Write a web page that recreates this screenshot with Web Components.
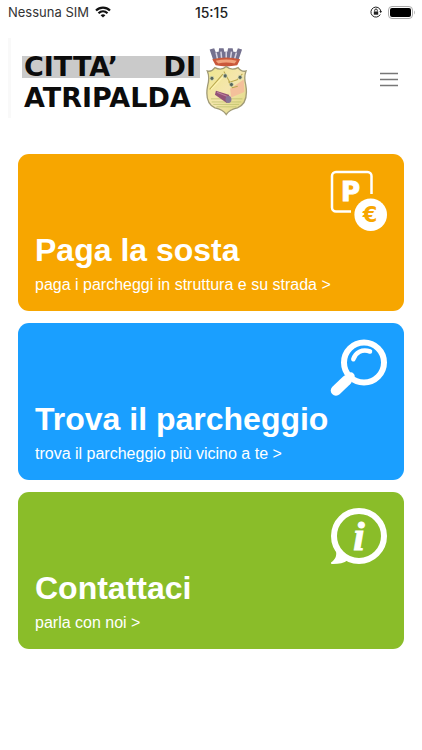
<!DOCTYPE html>
<html lang="it">
<head>
<meta charset="utf-8">
<meta name="viewport" content="width=device-width, initial-scale=1">
<title>Città di Atripalda</title>
<style>
  body {
    margin: 0;
    background: #fff;
    font-family: "Liberation Sans", Arial, sans-serif;
  }

  main {
    display: grid;
    gap: 12px;
    padding: 36px 18px;
  }
</style>
</head>
<body>
<status-bar carrier="Nessuna SIM" time="15:15"></status-bar>
<app-header>
  <city-logo></city-logo>
</app-header>
<main>
  <action-card color="#f7a600" href="#paga">
    <svg slot="icon" width="58" height="61" viewBox="0 0 58 61" fill="none" aria-hidden="true">
      <path d="M42.5 24V6a4 4 0 0 0-4-4H7a4 4 0 0 0-4 4v31.500a4 4 0 0 0 4 4h15" stroke="#fff" stroke-width="2.500"/>
      <text x="12" y="31" font-family="DejaVu Sans, sans-serif" font-weight="bold" font-size="26" fill="#fff" stroke="#fff">P</text>
      <circle cx="41.700" cy="44.700" r="16.300" fill="#fff"/>
      <text x="41" y="52" text-anchor="middle" font-family="DejaVu Sans, sans-serif" font-weight="bold" font-size="21" fill="#f7a600">€</text>
    </svg>
    <span slot="title">Paga la sosta</span>
    paga i parcheggi in struttura e su strada &gt;
  </action-card>
  <action-card color="#1a9fff" href="#trova">
    <svg slot="icon" width="58" height="61" viewBox="0 0 58 61" fill="none" stroke="#fff" stroke-linecap="round" aria-hidden="true">
      <circle cx="35" cy="23.500" r="20" stroke-width="6"/>
      <path d="M7 51.500L17.500 41.500" stroke-width="10.500"/>
      <path d="M18 41l4-4" stroke-width="7"/>
      <path d="M24.300 20.300C26.500 13.500 33 9.800 41 12.500" stroke-width="4.500"/>
    </svg>
    <span slot="title">Trova il parcheggio</span>
    trova il parcheggio più vicino a te &gt;
  </action-card>
  <action-card color="#8abd29" href="#contatti">
    <svg slot="icon" width="58" height="61" viewBox="0 0 58 61" fill="none" aria-hidden="true">
      <circle cx="30" cy="28" r="25" stroke="#fff" stroke-width="6"/>
      <path d="M7 43C8 48 6 52 2 54.500C1.500 55.500 2.500 56 4 56C10 56 15 55 19 52Z" fill="#fff"/>
      <text x="30" y="42" text-anchor="middle" font-family="Liberation Serif, serif" font-style="italic" font-weight="bold" font-size="41" fill="#fff" stroke="#fff">i</text>
    </svg>
    <span slot="title">Contattaci</span>
    parla con noi &gt;
  </action-card>
</main>

<script>
class StatusBar extends HTMLElement {
  constructor() {
    super();
    this.attachShadow({mode: 'open'});
  }

  connectedCallback() {
    this.shadowRoot.innerHTML = `
    <style>
      :host {
        display: grid;
        grid-template-columns: 1fr auto 1fr;
        align-items: center;
        height: 24px;
        padding: 0 7px 0 8px;
        font: 13px Inter, sans-serif;
        color: #333;
      }
      .left, .right {
        display: flex;
        align-items: center;
        gap: 6px;
      }
      .right {
        justify-content: flex-end;
      }
      time {
        font-size: 14px;
        font-weight: 500;
        color: #222;
      }
    </style>
    <div class="left">
      <span>${this.getAttribute('carrier')}</span>
      <svg width="16" height="12" viewBox="0 0 16 12" fill="none" stroke="#111" stroke-width="2.2">
        <path d="M1 4.500C5 .6 11 .6 15 4.500M3.500 7.200c2.600-2.500 6.400-2.500 9 0"/>
        <path d="M8 11.500L5.600 9.200c1.400-1.200 3.400-1.200 4.800 0z" fill="#111" stroke="none"/>
      </svg>
    </div>
    <time>${this.getAttribute('time')}</time>
    <div class="right">
      <svg width="12" height="12" viewBox="0 0 12 12" fill="none" stroke="#222">
        <path d="M10.300 8.500A5 5 0 1 1 10.800 5"/>
        <path d="M9.300 5h2.700l-1.200 2.200z" fill="#222" stroke="none"/>
        <rect x="3.800" y="5.500" width="4.400" height="3.200" fill="#222" stroke="none"/>
        <path d="M4.700 5.500V4.300a1.300 1.300 0 0 1 2.600 0v1.200"/>
      </svg>
      <svg width="27" height="13" viewBox="0 0 27 13">
        <rect x=".5" y=".5" width="24" height="12" rx="3.500" fill="#fff" stroke="#aaa"/>
        <rect x="2" y="2" width="21" height="9" rx="2" fill="#000"/>
        <path d="M26 4.500v4c1-.5 1-3.500 0-4z" fill="#aaa"/>
      </svg>
    </div>
    `;
  }
}

class AppHeader extends HTMLElement {
  constructor() {
    super();
    this.attachShadow({mode: 'open'});
  }

  connectedCallback() {
    this.shadowRoot.innerHTML = `
    <style>
      :host {
        display: flex;
        align-items: center;
        justify-content: space-between;
        padding: 14px 18px 0 8px;
      }
      button {
        display: flex;
        padding: 8px 6px 6px;
        border: none;
        background: none;
      }
    </style>
    <slot></slot>
    <button type="button" aria-label="Menu">
      <svg width="18" height="16" viewBox="0 0 18 16" stroke="#777" stroke-width="1.600">
        <path d="M0 2.500h18M0 8.500h18M0 14.500h18"/>
      </svg>
    </button>
    `;
  }
}

class CityLogo extends HTMLElement {
  constructor() {
    super();
    this.attachShadow({mode: 'open'});
  }

  connectedCallback() {
    this.shadowRoot.innerHTML = `
    <style>
      :host {
        display: flex;
        align-items: center;
        gap: 5px;
        box-sizing: border-box;
        height: 80px;
        padding: 8px 0 0 11px;
        border-left: 3px solid #f9f9f9;
        font: bold 27px "DejaVu Sans", sans-serif;
        color: #0c0c0c;
      }
      .name {
        width: 178px;
      }
      .row {
        display: flex;
        justify-content: space-between;
        padding: 0 4px 0 2px;
        line-height: 22px;
        background: #cacaca;
      }
      .row + .row {
        margin-top: 9px;
        background: none;
      }
    </style>
    <div class="name">
      <div class="row"><span>CITTA’</span><span>DI</span></div>
      <div class="row"><span>ATRIPALDA</span></div>
    </div>
    <svg width="43" height="68" viewBox="30 30 130 204" role="img" aria-label="Stemma">
      <defs>
        <linearGradient id="field" x1="0" y1="0" x2="1" y2="1">
          <stop offset="0" stop-color="#eee78d"/>
          <stop offset=".5" stop-color="#f5e6ae"/>
          <stop offset="1" stop-color="#dcd77c"/>
        </linearGradient>
      </defs>
      <g transform="translate(-13 -12.600) scale(1.140 1.150)">
        <path d="M50 40l12-3 4 10 8-1 1-9h12l2 9h8l2-9h12l2 9 8 1 4-10 11 3-10 29H60z" fill="#74718f"/>
        <path d="M67 48l4 18M80 46l2 20M94 45v20M108 46l-3 20M121 48l-5 18" stroke="#d7d4e2" stroke-width="4"/>
        <path d="M57 66Q94 57 131 66L123 82Q94 88 66 82z" fill="#c9583b"/>
        <path d="M66 70Q94 63 122 70L116 77Q94 72 73 77z" fill="#f1a37c"/>
      </g>
      <g transform="translate(0 -4) scale(1 1.050)">
        <path d="M37 98Q50 101 60 88Q80 98 94 85Q110 98 130 88Q140 101 154 98Q147 116 153 137Q163 190 128 204Q105 208 94 223Q84 208 60 204Q28 190 38 140Q45 116 37 98z" fill="url(#field)" stroke="#a19b76" stroke-width="4"/>
        <path d="M50 187h90M55 194h78M48 178h95M65 201h60" stroke="#b7bd67" stroke-width="2"/>
        <path d="M106 149L147 122L149 158L109 174z" fill="#f4c09b"/>
        <path d="M44 151L84 107M87 99l18 31 22-7 16-17M101 128l12 18 16-4" fill="none" stroke="#b9a84b" stroke-width="3"/>
        <path d="M48 151L88 111" stroke="#fff5b1" stroke-width="3"/>
        <path d="M63 155L102 166L109 182L96 190L60 166z" fill="#925277"/>
        <path d="M66 159L98 171" stroke="#bc829e" stroke-width="3"/>
        <ellipse cx="101" cy="180" rx="9" ry="10" fill="#877596"/>
        <g fill="#56665d" stroke="#dfe2b7" stroke-width="2">
          <circle cx="51" cy="119" r="6"/>
          <circle cx="91" cy="112" r="6"/>
          <circle cx="110" cy="137" r="6"/>
          <circle cx="136" cy="116" r="6"/>
        </g>
      </g>
    </svg>
    `;
  }
}

class ActionCard extends HTMLElement {
  constructor() {
    super();
    this.attachShadow({mode: 'open'});
  }

  connectedCallback() {
    this.shadowRoot.innerHTML = `
    <style>
      :host {
        display: block;
      }
      a {
        display: flex;
        flex-direction: column;
        padding: 16px 17px;
        border-radius: 11px;
        background: ${this.getAttribute('color')};
        color: #fff;
        text-decoration: none;
      }
      .icon {
        display: flex;
        align-self: flex-end;
      }
      h2 {
        margin: 0 0 6px;
        font-size: 32px;
        line-height: 38px;
      }
      p {
        margin: 0;
        font-size: 16px;
        line-height: 20px;
      }
    </style>
    <a href="${this.getAttribute('href')}">
      <div class="icon"><slot name="icon"></slot></div>
      <h2><slot name="title"></slot></h2>
      <p><slot></slot></p>
    </a>
    `;
  }
}

customElements.define('status-bar', StatusBar);
customElements.define('app-header', AppHeader);
customElements.define('city-logo', CityLogo);
customElements.define('action-card', ActionCard);
</script>
</body>
</html>
